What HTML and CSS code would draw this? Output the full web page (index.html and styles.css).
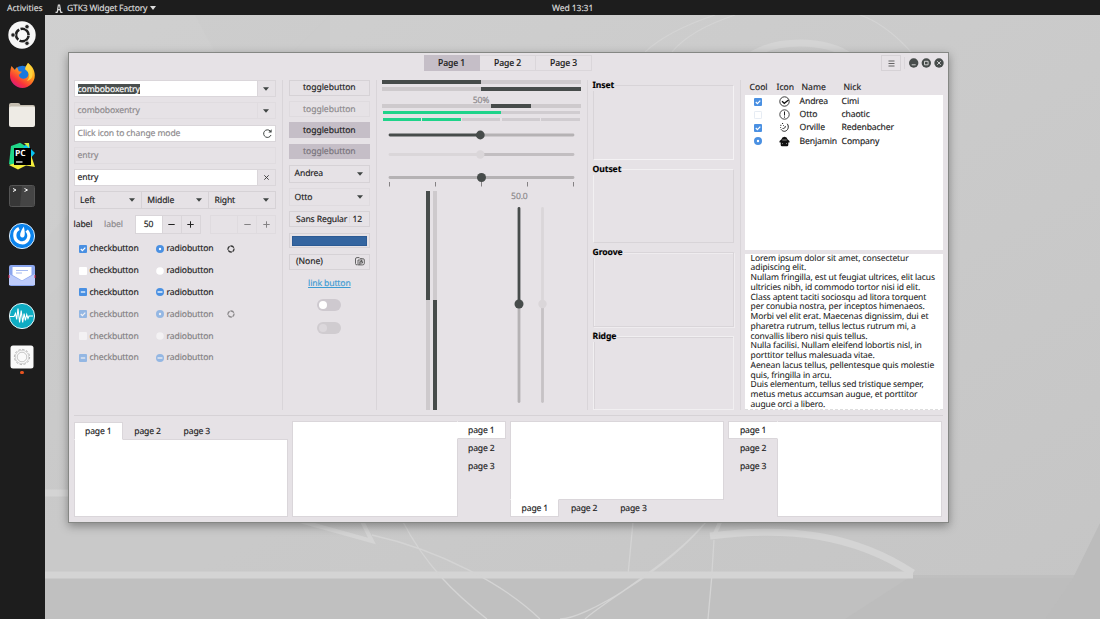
FILE: index.html
```
<!DOCTYPE html>
<html lang="en">
<head>
<meta charset="utf-8">
<title>GTK3 Widget Factory</title>
<link rel="stylesheet" href="styles.css">
</head>
<body>
<svg class="defs" width="0" height="0">
  <symbol id="check" viewBox="0 0 8 8"><rect width="8" height="8" rx="1" fill="#4a90e2"/><path d="M1.8 4l1.6 1.6L6.3 2.6" fill="none" stroke="#fff" stroke-width="1.2"/></symbol>
  <symbol id="blank" viewBox="0 0 8 8"><rect width="8" height="8" rx="1" fill="#fff"/></symbol>
  <symbol id="mixed" viewBox="0 0 8 8"><rect width="8" height="8" rx="1" fill="#4a90e2"/><path d="M1.8 4h4.4" stroke="#fff" stroke-width="1.2"/></symbol>
  <symbol id="radio" viewBox="0 0 8 8"><circle cx="4" cy="4" r="4" fill="#4a90e2"/><circle cx="4" cy="4" r="1.2" fill="#fff"/></symbol>
  <symbol id="rblank" viewBox="0 0 8 8"><circle cx="4" cy="4" r="3.8" fill="#fff"/></symbol>
  <symbol id="rmixed" viewBox="0 0 8 8"><circle cx="4" cy="4" r="4" fill="#4a90e2"/><path d="M1.5 4h5" stroke="#fff" stroke-width="1.3"/></symbol>
  <symbol id="spin" viewBox="0 0 8 8"><circle cx="4" cy="4" r="3" fill="none" stroke="#333" stroke-width="1.3" stroke-dasharray="4 .71" stroke-dashoffset="1"/></symbol>
  <symbol id="arrow" viewBox="0 0 6 4"><path d="M0 .3h6L3 3.7z" fill="#3f4443"/></symbol>
</svg>

<svg class="wallpaper" viewBox="0 0 1100 619">
  <defs><linearGradient id="bg" x1="0" y1="0" x2="1" y2="1"><stop offset="0" stop-color="#d0d0d0"/><stop offset=".55" stop-color="#cacaca"/><stop offset="1" stop-color="#c5c5c5"/></linearGradient></defs>
  <rect width="1100" height="619" fill="url(#bg)"/>
  <path d="M45 300L330 15h-135L215 52 45 240z" fill="#cbcbcb" opacity=".4"/>
  <path d="M45 300L330 15V619H45z" fill="#c6c6c6" opacity=".3"/>
  <path d="M45 578H1073L1045 619H45z" fill="#c0c0c0"/>
  <path d="M1073 578L1100 523V619H1045z" fill="#bcbcbc"/>
  <path d="M913 575H1075L1045 619H845z" fill="#bababa" opacity=".6"/>
  <g fill="none" stroke="#d4d4d4">
    <path d="M45 493H80M45 575H913" stroke-width="7"/>
    <path d="M710 536C790 526 855 535 913 573" stroke-width="7"/>
    <path d="M713 538L721 520M300 521L372 541 360 517" stroke-width="4"/>
    <path d="M747 58C775 38 825 38 853 58" stroke-width="7"/>
    <path d="M645 52C660 38 685 25 715 15M860 15C895 27 925 65 945 100M672 52Q690 30 735 15" stroke-width="1.3"/>
    <path d="M372 535C440 550 505 585 540 619M402 520C425 565 455 594 487 619M714 540Q712 580 708 619M633 522L628 575M706 522C666 570 585 619 560 619M703 525C675 560 600 605 585 619" stroke-width="1.3"/>
  </g>
</svg>

<div class="desktop">
<header class="topbar">
  <span class="activities">Activities</span>
  <svg class="appicon" width="8" height="9" viewBox="0 0 8 9"><path d="M.5 8.300H2.100L2.900 5.700H5.100L5.900 8.300H7.500M2.600 5.500L3.400 1h1.200l.8 4.500" fill="none" stroke="#ddd" stroke-width="1.200"/></svg>
  <span class="appname">GTK3 Widget Factory</span>
  <svg class="apparrow" width="6" height="4" viewBox="0 0 6 4"><path d="M0 0h6L3 4z" fill="#ddd"/></svg>
  <span class="clock">Wed 13:31</span>
</header>
<nav class="dock">
  <svg viewBox="0 0 28 28"><circle cx="14" cy="14" r="13.7" fill="#f7f7f7"/><circle cx="14.3" cy="14" r="6.3" fill="none" stroke="#222" stroke-width="2.6" stroke-dasharray="11.8 1.4" stroke-dashoffset="-.7"/><g fill="#222" stroke="#f7f7f7" stroke-width=".8"><circle cx="5" cy="14" r="2.2"/><circle cx="19" cy="5.7" r="2.2"/><circle cx="19" cy="22.3" r="2.2"/></g></svg>
  <svg viewBox="0 0 28 28"><defs><linearGradient id="ff" x1=".9" y1="0" x2=".2" y2="1"><stop offset="0" stop-color="#ffe83a"/><stop offset=".4" stop-color="#ff9b19"/><stop offset=".75" stop-color="#f9333a"/><stop offset="1" stop-color="#d4178a"/></linearGradient></defs><circle cx="14.5" cy="14.5" r="9.8" fill="#1878df"/><path d="M3.5 5l3.5 4 2-3 1.8 4.3 3.2.5-3.2 3.2c1 4 5 5 8.2 2.4 2.6-2.3 1.8-7.4-1.6-8.4L20 2c4 3 6.800 7 6.800 12.500A12.400 12.400 0 0 1 2 14.500C2 10.500 2.400 8 3.500 5z" fill="url(#ff)"/><path d="M20 2c-2.500 3-3.200 5.500-2.600 6.700 4 2.500 5.300 7.500 1.600 11 4-.5 6-4 5.600-8C24.500 7.500 23 5 20 2z" fill="#ffd23c"/></svg>
  <svg viewBox="0 0 28 28"><path d="M1 8V4q0-2 2-2h7q2 0 2.500 2H25q2 0 2 2v3z" fill="#c5beb1"/><rect x="1" y="5.500" width="26" height="20.500" rx="2" fill="#eeebe5"/></svg>
  <svg viewBox="0 0 28 28"><path d="M3 4L12 .8 19 5 10 26.500 1 22z" fill="#21d789"/><path d="M16 4l5-3 1 5 5 5-5 6-8-7z" fill="#07c3f2"/><path d="M8 21l13 1 2-9 4 12-9-1.500L10 27.500 1 23z" fill="#f5ee3c"/><path d="M16 1l5 0 0 5z" fill="#cbea47"/><rect x="6" y="6" width="17" height="17" fill="#000"/><text x="7" y="14.300" class="pc">PC</text><path d="M8 20h6.500" stroke="#fff" stroke-width="1.200"/></svg>
  <svg viewBox="0 0 28 28"><rect x="1.500" y="3.500" width="25" height="21" rx="2" fill="#373737" stroke="#555"/><path d="M14 4h12v20H12z" fill="#454545"/><path d="M5 6.500l3 1.500-3 1.500M16.500 6.500l3 1.500-3 1.500" fill="none" stroke="#fff" stroke-width="1"/></svg>
  <svg viewBox="0 0 28 28"><circle cx="14" cy="14" r="12.600" fill="#0b83ed" stroke="#d8eafa"/><path d="M11 6.500C5 9.500 5.500 18.500 12 20.500 19.500 22.500 23.500 14 18.700 8.500" fill="none" stroke="#fff" stroke-width="3.200"/><path d="M15.800 4.500C17 10 17.600 15.500 14.500 15.500 10.500 15.500 12 10 15.800 4.500z" fill="#fff"/></svg>
  <svg viewBox="0 0 28 28"><rect x="1" y="3" width="26" height="21" rx="2" fill="#8ba6ee"/><path d="M1 12l13 7 13-7v11H1z" fill="#bdcbfa"/><path d="M4.500 5h19v8L14 18.500 4.500 13z" fill="#fff"/><path d="M8 8.500h12M8 11h6" stroke="#a5baf1"/><path d="M1 13v3M27 13v3" stroke="#d82048"/></svg>
  <svg viewBox="0 0 28 28"><circle cx="14" cy="14" r="12.600" fill="#0eacc3" stroke="#e7f5f7" stroke-width="1"/><path d="M2 14.500h4l1.500-3 1.200 6 1.300-11 1.600 14 1.600-12 1.500 12 1.400-9 1.300 7 1.300-6 1.300 4 1-2.500h4" fill="none" stroke="#fff" stroke-width="1.100"/></svg>
  <svg viewBox="0 0 28 28"><rect x="2.500" y="2.500" width="23" height="23" rx="2.500" fill="#fafafa"/><g fill="none" stroke="#b0b0b0"><circle cx="14" cy="14" r="7.600" stroke-dasharray="2.300 1.680" stroke-width="1"/><circle cx="14" cy="14" r="6.700" stroke-width=".5"/><circle cx="14" cy="14" r="4.800" stroke-width=".7"/></g></svg>
  <i class="running"></i>
</nav>

<main class="window">
  <div class="titlebar">
    <div class="switcher"><button class="on">Page 1</button><button>Page 2</button><button>Page 3</button></div>
    <div class="controls">
      <button class="menu"><svg width="7" height="7" viewBox="0 0 7 7"><path d="M.5 1h6M.5 3.500h6M.5 6h6" stroke="#555" stroke-width=".9"/></svg></button>
      <span class="divider"></span>
      <svg width="35" height="10" viewBox="0 0 35 10"><g fill="#474c4b"><circle cx="4.700" cy="5" r="4.700"/><circle cx="17.300" cy="5" r="4.700"/><circle cx="30" cy="5" r="4.700"/></g><path d="M2.700 6.800h4M15.500 3.300h3.600v3.500h-3.600zM28.200 3.200l3.600 3.600m0-3.600l-3.600 3.600" fill="none" stroke="#ddd" stroke-width=".9"/></svg>
    </div>
  </div>

  <div class="columns">
    <section class="c1">
      <div class="field"><div class="input focus"><mark>comboboxentry</mark></div><div class="btn"><svg class="arr"><use href="#arrow"/></svg></div></div>
      <div class="field off"><div class="input">comboboxentry</div><div class="btn"><svg class="arr"><use href="#arrow"/></svg></div></div>
      <div class="field"><div class="input hint"><span>Click icon to change mode</span><svg width="9" height="9" viewBox="0 0 9 9"><path d="M8 6A3.800 3.800 0 1 1 7.200 2" fill="none" stroke="#3f4443" stroke-width="1"/><path d="M8.600.3v3.200H5.400z" fill="#3f4443"/></svg></div></div>
      <div class="field off"><div class="input">entry</div></div>
      <div class="field"><div class="input">entry</div><div class="btn"><svg width="5" height="5" viewBox="0 0 5 5"><path d="M.3.3l4.400 4.400m0-4.400L.3 4.700" stroke="#333" stroke-width=".9"/></svg></div></div>
      <div class="trio"><div>Left<svg class="arr"><use href="#arrow"/></svg></div><div>Middle<svg class="arr"><use href="#arrow"/></svg></div><div>Right<svg class="arr"><use href="#arrow"/></svg></div></div>
      <div class="spins"><span>label</span><span class="dim">label</span>
        <div class="spinbox"><b>50</b><i><svg width="7" height="7" viewBox="0 0 7 7"><path d="M.3 3.500h6.400" stroke="#222"/></svg></i><i><svg width="7" height="7" viewBox="0 0 7 7"><path d="M.3 3.500h6.400M3.500.3v6.400" stroke="#222"/></svg></i></div>
        <div class="spinbox off"><b></b><i><svg width="7" height="7" viewBox="0 0 7 7"><path d="M.3 3.500h6.400" stroke="#222"/></svg></i><i><svg width="7" height="7" viewBox="0 0 7 7"><path d="M.3 3.500h6.400M3.500.3v6.400" stroke="#222"/></svg></i></div>
      </div>
      <div class="checks">
        <div><svg><use href="#check"/></svg><span>checkbutton</span><svg><use href="#radio"/></svg><span>radiobutton</span><svg><use href="#spin"/></svg></div>
        <div><svg><use href="#blank"/></svg><span>checkbutton</span><svg><use href="#rblank"/></svg><span>radiobutton</span></div>
        <div><svg><use href="#mixed"/></svg><span>checkbutton</span><svg><use href="#rmixed"/></svg><span>radiobutton</span></div>
        <div class="dis"><svg><use href="#check"/></svg><span>checkbutton</span><svg><use href="#radio"/></svg><span>radiobutton</span><svg><use href="#spin"/></svg></div>
        <div class="dis"><svg><use href="#blank"/></svg><span>checkbutton</span><svg><use href="#rblank"/></svg><span>radiobutton</span></div>
        <div class="dis"><svg><use href="#mixed"/></svg><span>checkbutton</span><svg><use href="#rmixed"/></svg><span>radiobutton</span></div>
      </div>
    </section>

    <section class="c2">
      <div class="tb">togglebutton</div>
      <div class="tb dimbtn">togglebutton</div>
      <div class="tb on">togglebutton</div>
      <div class="tb on dimtext">togglebutton</div>
      <div class="combo">Andrea<svg class="arr"><use href="#arrow"/></svg></div>
      <div class="combo faint">Otto<svg class="arr"><use href="#arrow"/></svg></div>
      <div class="tb split font"><span>Sans Regular</span><span class="size">12</span></div>
      <div class="tb color"><i></i></div>
      <div class="tb split"><span>(None)</span><svg width="10" height="9" viewBox="0 0 10 9"><path d="M2.500 7.900H2Q.5 7.900.5 6.500V2Q.5.600 2 .6h2.200l1 1h2.300q1.800 0 1.800 1.400v3.500q0 1.400-1.800 1.400H3V3h4.700M4.800 8V4.600h2.700V6H5M6.500 4.600V3" fill="none" stroke="#555" stroke-width=".9"/></svg></div>
      <a class="link">link button</a>
      <div class="switch"><i></i></div>
      <div class="switch dull"><i></i></div>
    </section>

    <section class="c3">
      <div class="bar"><i class="half"></i></div>
      <div class="bar"><i class="half right"></i></div>
      <div class="pct">50%</div>
      <div class="bar"><i class="pulse"></i></div>
      <div class="level"><i class="g l60"></i><i class="l40"></i></div>
      <div class="level seg"><i class="g"></i><i class="g"></i><i></i><i></i><i></i></div>
      <svg class="scales" width="199" height="66" viewBox="0 0 199 66">
        <g stroke-width="2.800" stroke-linecap="round"><path d="M98 13h93" stroke="#b5b2b4"/><path d="M8 13h90" stroke="#474c4b"/><path d="M98 32.500h93" stroke="#c2bec1"/><path d="M8 32.500h90" stroke="#dad6d9"/><path d="M8 55.500h183" stroke="#b5b2b4"/></g>
        <circle cx="98.300" cy="13" r="4.400" fill="#474c4b"/><circle cx="98.300" cy="32.500" r="4.200" fill="#dad6d9"/><circle cx="99.500" cy="55.500" r="4.500" fill="#474c4b"/>
        <path d="M7.500 60v4.500M53.500 60v4.500M99.500 60v4.500M145.500 60v4.500M191.500 60v4.500" stroke="#858284"/>
      </svg>
      <div class="verticals">
        <div class="vbars"><div class="vbar"><i></i></div><div class="vbar low"><i></i></div></div>
        <div class="vscale"><span>50.0</span><svg width="34" height="200" viewBox="0 0 34 200"><g stroke-width="2.800" stroke-linecap="round"><path d="M5 99v96.500" stroke="#b5b2b4"/><path d="M5 2.500V99" stroke="#474c4b"/><path d="M28.500 99v96.500" stroke="#c6c2c5"/><path d="M28.500 2.500V99" stroke="#dad6d9"/></g><circle cx="5" cy="98" r="4.500" fill="#474c4b"/><circle cx="28.500" cy="98" r="4.200" fill="#dad6d9"/></svg></div>
      </div>
    </section>

    <section class="c4">
      <div class="frame inset"><b>Inset</b></div>
      <div class="frame outset"><b>Outset</b></div>
      <div class="frame groove"><b>Groove</b></div>
      <div class="frame ridge"><b>Ridge</b></div>
    </section>

    <section class="c5">
      <div class="thead"><span>Cool</span><span>Icon</span><span>Name</span><span>Nick</span></div>
      <div class="list">
        <div class="row"><svg width="8" height="8"><use href="#check"/></svg><svg width="11" height="11" viewBox="0 0 11 11"><circle cx="5.500" cy="5.500" r="4.700" fill="none" stroke="#222" stroke-width=".9"/><path d="M3 5.200l2.300 2.100L9.500 4" fill="none" stroke="#111" stroke-width="1.300"/></svg><span>Andrea</span><span>Cimi</span></div>
        <div class="row"><svg width="8" height="8" viewBox="0 0 8 8"><rect x=".4" y=".4" width="7.200" height="7.200" rx="1" fill="#fff" stroke="#dce4ef" stroke-width=".8"/></svg><svg width="11" height="11" viewBox="0 0 11 11"><circle cx="5.500" cy="5.500" r="4.700" fill="none" stroke="#333" stroke-width=".9"/><path d="M5.500 2.500V6.500M5.500 7.500v1.200" stroke="#222"/></svg><span>Otto</span><span>chaotic</span></div>
        <div class="row"><svg width="8" height="8"><use href="#check"/></svg><svg width="11" height="11" viewBox="0 0 11 11"><path d="M8.200 1.800C10.500 4.500 9 9 5.500 9.300 4 9.300 2.800 8.500 2 7.300" fill="none" stroke="#222"/><path d="M6.300 4c.3 1.700-1 2.700-2.800 2.500" fill="none" stroke="#222" stroke-width=".9"/><path d="M1.300 3.300h1.100M3 1.500h1.100M1.300 5.500h.8M4.300 3.500h.7" stroke="#222"/></svg><span>Orville</span><span>Redenbacher</span></div>
        <div class="row"><svg width="8" height="8"><use href="#radio"/></svg><svg width="11" height="11" viewBox="0 0 11 11"><path d="M2.300 3.500Q3 .8 5.500.8T8.700 3.500L10.500 5v1.500H9.300V9q0 1.200-1.300 1.200H3Q1.700 10.200 1.700 9V6.500H.5V5z" fill="#111"/><path d="M3.300 4h4.400M3 7.600h1m3 0h1" stroke="#fff" stroke-width=".5"/></svg><span>Benjamin</span><span>Company</span></div>
      </div>
      <div class="textview"><p>Lorem ipsum dolor sit amet, consectetur</p><p>adipiscing elit.</p><p>Nullam fringilla, est ut feugiat ultrices, elit lacus</p><p>ultricies nibh, id commodo tortor nisi id elit.</p><p>Class aptent taciti sociosqu ad litora torquent</p><p>per conubia nostra, per inceptos himenaeos.</p><p>Morbi vel elit erat. Maecenas dignissim, dui et</p><p>pharetra rutrum, tellus lectus rutrum mi, a</p><p>convallis libero nisi quis tellus.</p><p>Nulla facilisi. Nullam eleifend lobortis nisl, in</p><p>porttitor tellus malesuada vitae.</p><p>Aenean lacus tellus, pellentesque quis molestie</p><p>quis, fringilla in arcu.</p><p>Duis elementum, tellus sed tristique semper,</p><p>metus metus accumsan augue, et porttitor</p><p>augue orci a libero.</p></div>
    </section>
  </div>

  <div class="notebooks">
    <div class="nb top"><div class="tabs"><span class="cur">page 1</span><span>page 2</span><span>page 3</span></div><div class="page"></div></div>
    <div class="nb right"><div class="tabs"><span class="cur">page 1</span><span>page 2</span><span>page 3</span></div><div class="page"></div></div>
    <div class="nb bottom"><div class="tabs"><span class="cur">page 1</span><span>page 2</span><span>page 3</span></div><div class="page"></div></div>
    <div class="nb left"><div class="tabs"><span class="cur">page 1</span><span>page 2</span><span>page 3</span></div><div class="page"></div></div>
  </div>
</main>
</div>
</body>
</html>
```
FILE: styles.css
```
* { box-sizing: border-box; }
body { margin: 0; width: 1100px; height: 619px; overflow: hidden; position: relative; font: 8.6px/11px "Noto Sans", "Open Sans", sans-serif; color: #1c1c1c; letter-spacing: -.12px; text-rendering: geometricPrecision; -webkit-text-stroke: .15px; }
svg { display: block; flex: none; }
button { font: inherit; letter-spacing: inherit; color: inherit; padding: 0; margin: 0; border: 0; background: none; }
p { margin: 0; }
.defs { position: absolute; }
.wallpaper { position: absolute; inset: 0; width: 1100px; height: 619px; }
.desktop { position: absolute; inset: 0; display: grid; grid-template: 15px 1fr / 45px 1fr; }

.topbar { grid-column: 1 / 3; background: #1d1d1d; color: #dcdcdc; display: flex; align-items: center; position: relative; padding-top: 1px; }
.activities { margin-left: 7px; width: 48px; letter-spacing: -.02px; }
.appname { margin-left: 4px; width: 81px; letter-spacing: -.2px; }
.apparrow { margin-left: 1.500px; }
.clock { position: absolute; left: 552px; letter-spacing: -.1px; }

.dock { background: #1d1d1d; display: flex; flex-direction: column; align-items: center; padding: 6px 1px 0 0; gap: 12.200px; }
.dock svg { width: 28px; height: 28px; }
.pc { font: bold 8.500px "Open Sans", sans-serif; fill: #fff; letter-spacing: 0; }
.running { width: 3.500px; height: 3.500px; border-radius: 50%; background: #e95420; margin-top: -12px; }

.window { position: absolute; left: 68px; top: 52px; width: 880.500px; height: 471px; background: #e6e2e6; border: 1px solid #858784; box-shadow: 0 3px 9px rgba(0,0,0,.35); display: flex; flex-direction: column; padding: 0 5px 0 4.600px; }
.titlebar { height: 27px; display: flex; position: relative; justify-content: center; padding-top: 2px; }
.switcher { display: flex; height: 16px; width: 168px; font-weight: 500; }
.switcher button { flex: 1; border: 1px solid #dad6da; border-left: 0; }
.switcher .on { background: #c5bec7; border-color: #c5bec7; }
.controls { position: absolute; right: -1px; top: 2px; height: 16px; display: flex; align-items: center; }
.menu { width: 20px; height: 16px; border: 1px solid #d6d2d6; display: flex; align-items: center; justify-content: center; }
.divider { width: 1px; height: 12px; background: #dad6da; margin: 0 3.500px 0 3px; }

.columns { height: 330px; display: grid; grid-template-columns: 208px 94px 211px 153px 203px; }
.c2, .c3, .c4, .c5 { border-left: 1px solid #d9d5d9; }
.c1 { padding-right: 5.500px; display: flex; flex-direction: column; }
.field { height: 17px; margin-bottom: 5.300px; display: flex; border: 1px solid #dad6da; }
.input { flex: 1; background: #fff; display: flex; align-items: center; padding: 0 3px; }
mark { background: #4a4f4e; color: #fff; line-height: 10px; }
.btn { width: 18.500px; border-left: 1px solid #dad6da; display: flex; align-items: center; justify-content: center; }
.arr { width: 6px; height: 4px; }
.off, .off .btn { border-color: #e0dce0; }
.off .input { background: none; color: #8b888b; }
.input.hint { color: #8b888b; justify-content: space-between; }
.trio { height: 18px; display: flex; border: 1px solid #d6d2d6; }
.trio div { flex: 1; display: flex; align-items: center; justify-content: space-between; padding: 0 6px 0 5.500px; }
.trio div + div { border-left: 1px solid #d6d2d6; }
.spins { display: flex; align-items: center; height: 19px; margin-top: 5.500px; }
.spins > span { width: 30.500px; }
.dim { color: #8b888b; }
.spinbox { height: 19px; width: 66px; display: flex; border: 1px solid #d9d5d9; }
.spinbox b { flex: 1; font-weight: 400; background: #fff; display: flex; align-items: center; justify-content: center; }
.spinbox i { width: 19px; border-left: 1px solid #d9d5d9; display: flex; align-items: center; justify-content: center; }
.spinbox.off { margin-left: auto; border-color: #dfdbdf; }
.off b { background: none; }
.off i { border-color: #dfdbdf; }
.off i svg { opacity: .5; }
.checks { margin-top: 4px; }
.checks div { height: 21.800px; display: grid; grid-template-columns: 11px 66px 11px 60px 8px; align-items: center; padding-left: 5px; }
.checks svg { width: 8px; height: 8px; }
.dis { opacity: .52; }

.c2 { padding: 0 5.500px 0 6px; display: flex; flex-direction: column; }
.tb { height: 15.800px; margin-bottom: 5.420px; border: 1px solid #d6d2d6; display: flex; align-items: center; justify-content: center; flex: none; letter-spacing: -.06px; }
.dimbtn { border-color: #dfdbdf; color: #8b888b; }
.tb.on { background: #c5bec7; border-color: #c5bec7; }
.dimtext { color: #77727a; }
.combo { height: 18px; margin-bottom: 5.300px; border: 1px solid #d6d2d6; display: flex; align-items: center; justify-content: space-between; padding: 0 6px 0 5px; flex: none; }
.faint { border-color: #dfdbdf; }
.split { justify-content: space-between; padding: 0 4px 0 6.500px; }
.font { letter-spacing: -.12px; padding-right: 7px; }
.size { border-left: 1px solid #dad6da; padding-left: 3px; line-height: 7px; }
.color { padding: 2px; }
.color i { flex: 1; height: 10px; background: #3465a0; border: 1px solid #2b5a94; }
.link { align-self: center; color: #3c9bd3; text-decoration: underline; margin-top: 2.500px; height: 11px; }
.switch { width: 24px; height: 12px; border-radius: 6px; background: #cec9cf; align-self: center; margin-top: 10px; padding: 2px; }
.switch i { display: block; width: 8px; height: 8px; border-radius: 50%; background: #fff; }
.switch + .switch { margin-top: 11px; }
.switch.dull { background: #d0ccd0; }
.dull i { background: #dcd8dc; }

.c3 { padding: 0 6px 0 5px; display: flex; flex-direction: column; }
.bar { height: 4px; background: #cecacd; margin-bottom: 3.300px; flex: none; }
.bar i { display: block; height: 4px; background: #474c4b; }
.half { width: 50%; }
.half.right { margin-left: 50%; }
.pulse { width: 20%; margin-left: 55%; }
.pct { height: 9.400px; line-height: 10px; text-align: center; color: #8b888b; }
.level { height: 2.600px; margin: 0 1px 4.400px; display: flex; flex: none; }
.level i { background: #d0ccd0; flex: 1; }
.level .g { background: #1fd38a; }
.level .l60 { flex: 3; }
.level .l40 { flex: 2; }
.level.seg { gap: 1.500px; margin-bottom: 0; }
.scales { margin-top: 1px; }
.verticals { flex: 1; margin-top: 3px; display: flex; padding-left: 44px; }
.vbars { display: flex; gap: 3.500px; }
.vbar { width: 4px; background: #cecacd; }
.vbar i { display: block; height: 50%; background: #474c4b; }
.vbar.low { display: flex; align-items: flex-end; }
.vbar.low i { width: 4px; }
.vscale { margin-left: 73px; color: #8b888b; }
.vscale span { display: block; height: 15px; padding-left: 1px; }
.vscale svg { margin-left: 4px; }

.c4 { padding: 5px 6px 0 5px; display: flex; flex-direction: column; justify-content: space-between; }
.frame { height: 74.500px; position: relative; border: 1px solid; }
.frame b { position: absolute; left: -1px; top: -6px; background: #e6e2e6; padding-right: 1px; color: #000; line-height: 11px; letter-spacing: -.1px; }
.inset { border-color: #d8d4d8 #f4f2f4 #f4f2f4 #d8d4d8; }
.outset { border-color: #f2f0f2 #d8d4d8 #d8d4d8 #f2f0f2; }
.groove { border-color: #d9d5d9; box-shadow: inset 1px 1px #efecef, 1px 1px #efecef; }
.ridge { border-color: #f1eff1; box-shadow: inset 1px 1px #d9d5d9; }

.c5 { padding-left: 4px; display: flex; flex-direction: column; }
.thead { height: 15px; display: grid; grid-template-columns: 27px 25px 42px 1fr; padding: 2px 0 0 5px; line-height: 11px; letter-spacing: -.02px; }
.list { height: 155px; background: #fff; }
.row { display: grid; grid-template-columns: 26px 20px 42px 1fr; height: 13.200px; align-items: center; padding-left: 9px; }
.row svg + svg { margin-left: -1px; }
.textview { margin-top: 3.500px; height: 156.500px; overflow: hidden; background: #fff; padding: 0 6px; border-bottom: 1px dashed #ddd; -webkit-text-stroke: .08px; }
.textview p { line-height: 9.760px; height: 9.760px; white-space: nowrap; font-size: 8.500px; letter-spacing: -.1px; }

.notebooks { border-top: 1px solid #d6d2d6; margin-top: 5px; padding-top: 5px; height: 102px; display: grid; grid-template-columns: repeat(4, 214px); justify-content: space-between; }
.nb { display: flex; min-height: 0; }
.top { flex-direction: column; padding-top: 1px; }
.bottom { flex-direction: column-reverse; }
.right { flex-direction: row-reverse; }
.page { flex: 1; background: #fff; border: 1px solid #dad6da; }
.tabs { display: flex; position: relative; z-index: 1; }
.tabs span { width: 49.300px; height: 18px; display: flex; align-items: center; justify-content: center; border: 1px solid transparent; letter-spacing: -.16px; }
.tabs .cur { background: #fff; border-color: #dad6da; }
.top .tabs { margin-bottom: -1px; }
.top .cur { border-bottom-color: #fff; }
.bottom .tabs { margin-top: -1px; }
.bottom .cur { border-top-color: #fff; }
.left .tabs, .right .tabs { flex-direction: column; }
.right .tabs { margin-left: -1px; }
.right .cur { border-left-color: #fff; }
.left .tabs { margin-right: -1px; }
.left .cur { border-right-color: #fff; }
```
